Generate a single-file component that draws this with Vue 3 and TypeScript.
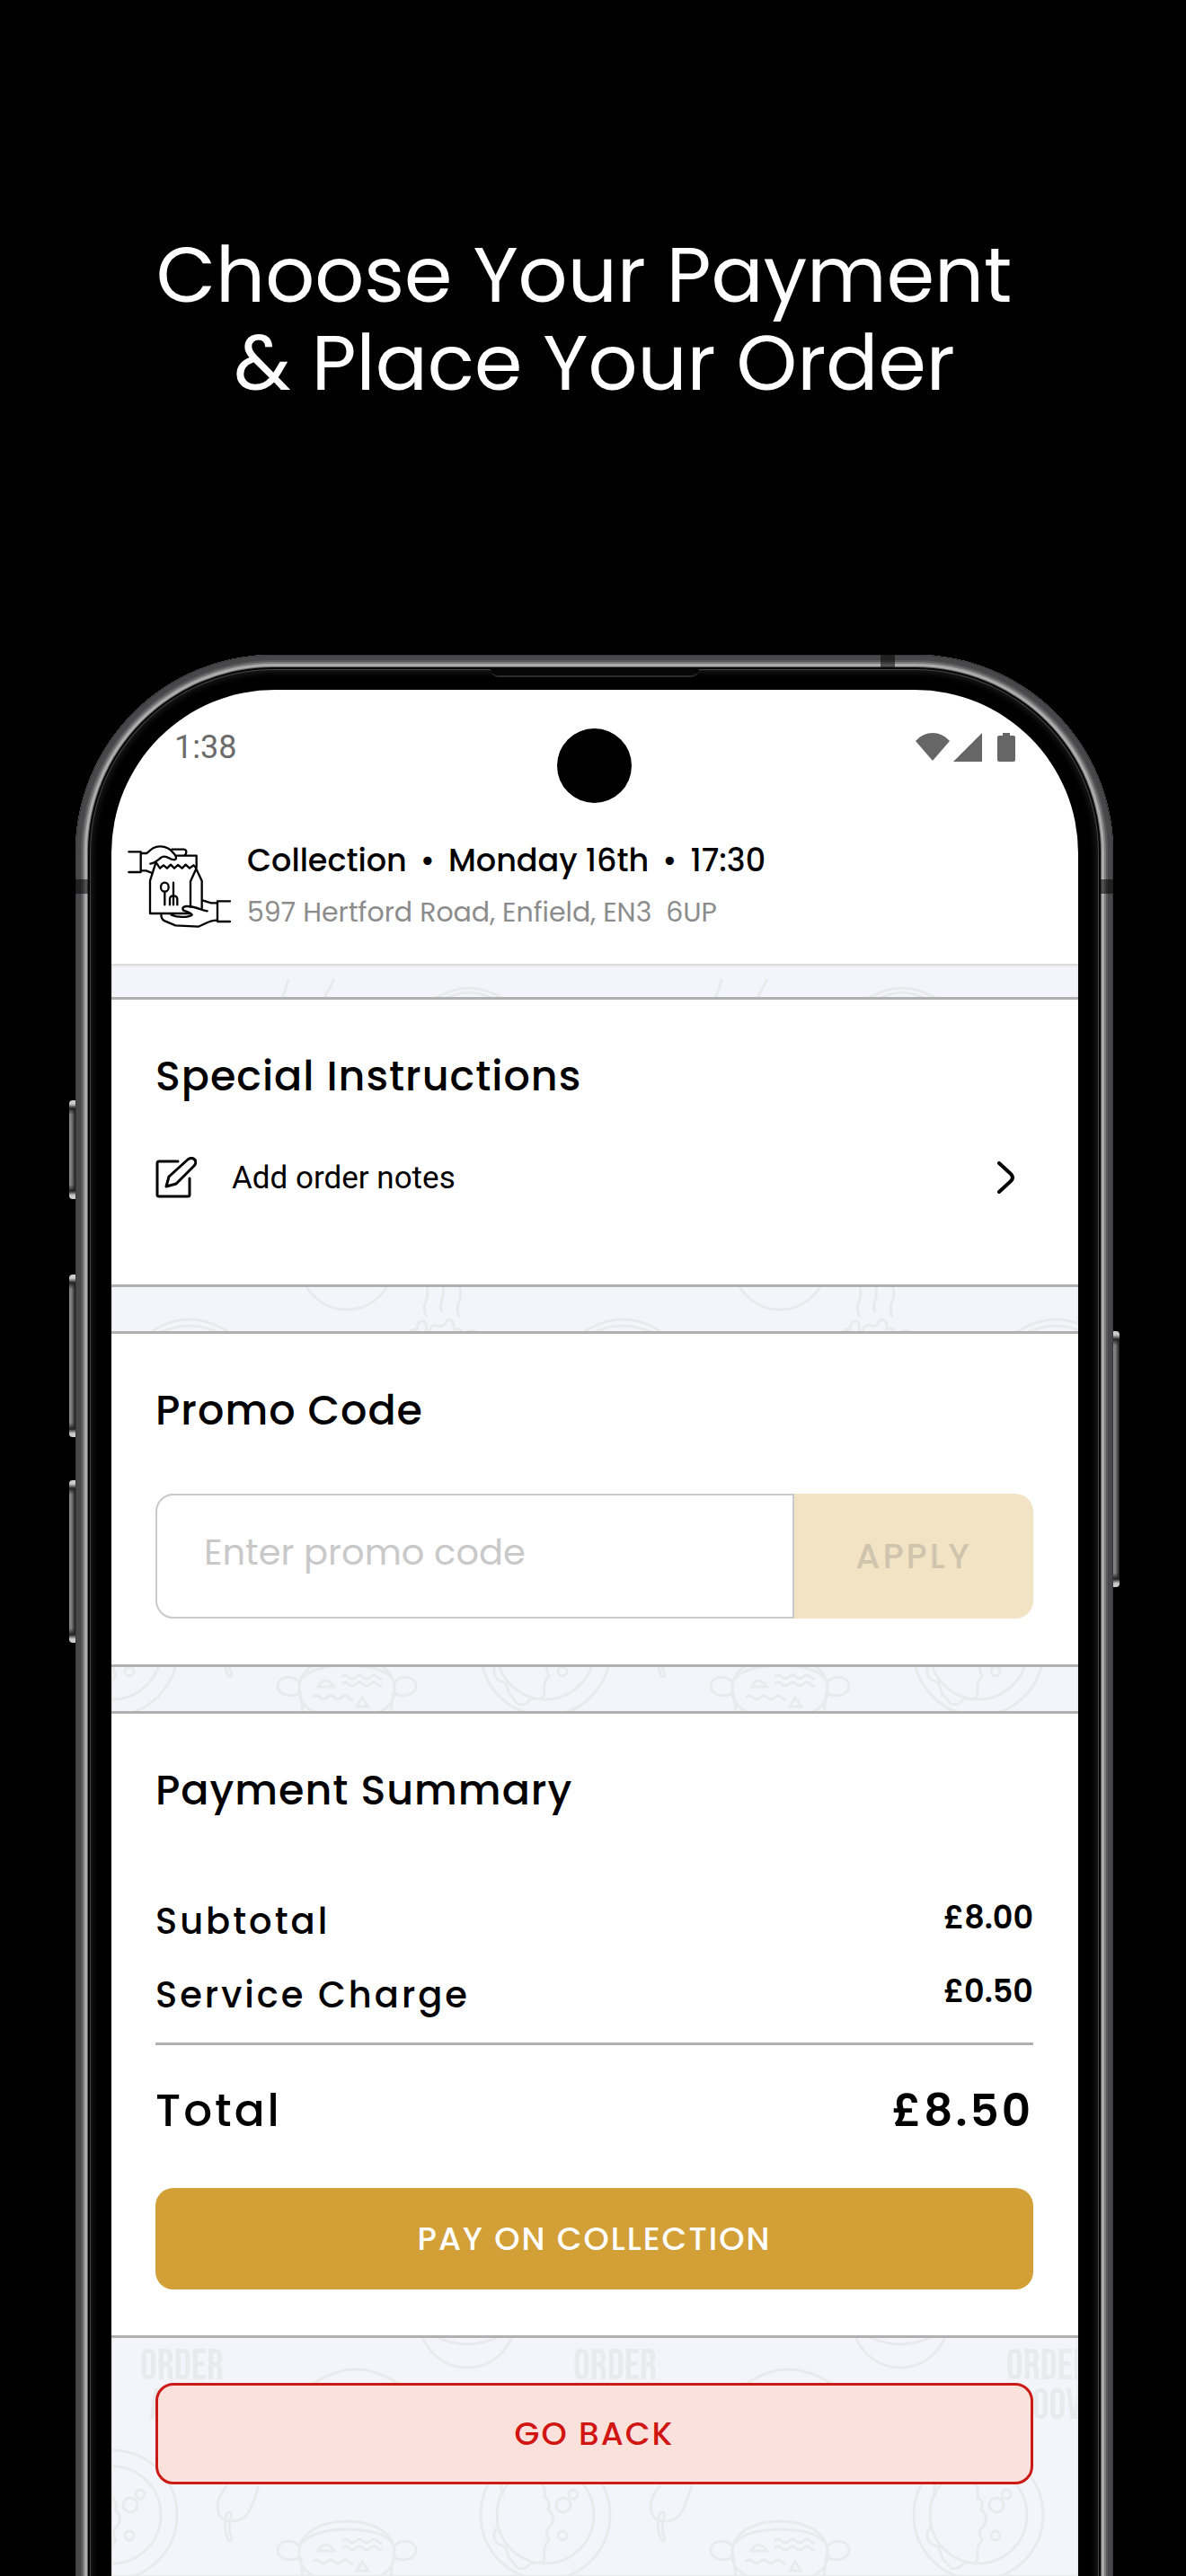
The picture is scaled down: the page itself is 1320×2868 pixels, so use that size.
<script setup lang="ts">
import { ref } from 'vue'

interface SummaryLine {
  label: string
  amount: string
}

const promo = ref('')

const lines: SummaryLine[] = [
  { label: 'Subtotal', amount: '£8.00' },
  { label: 'Service Charge', amount: '£0.50' },
]
</script>

<template>
  <main class="page">
    <h1 class="headline">Choose Your Payment&nbsp;<br />&amp; Place Your Order</h1>

    <div class="phone">
      <span class="key key-action"></span>
      <span class="key key-up"></span>
      <span class="key key-down"></span>
      <span class="key key-power"></span>
      <span class="band band-left"></span>
      <span class="band band-right"></span>
      <span class="band band-top"></span>
      <span class="speaker"></span>

      <div class="screen">
        <span class="camera"></span>
        <div class="status">
          <span>1:38</span>
          <svg class="status-icons" viewBox="0 0 112 34" aria-hidden="true">
            <path d="M0 10C11-2 27-2 38 10L19 32Z" />
            <path d="M74 1V33H42Z" />
            <path d="M97 1h8v3h4q2 0 2 2v25q0 2-2 2H93q-2 0-2-2V6q0-2 2-2h4Z" />
          </svg>
        </div>

        <header class="order">
          <svg class="bag" viewBox="66 116 345 282" aria-hidden="true">
            <path d="M70 141H110V209H70" />
            <path d="M112 146H130C146 131 156 122 176 123C198 124 207 130 216 142C226 152 232 160 226 166C218 171 209 165 200 160C190 156 182 156 177 161C166 170 156 180 142 181" />
            <path d="M214 133H254Q262 134 262 142Q262 149 256 153M230 154H296V192M113 204H128L148 212" />
            <path d="M162 178L174 196L186 186L198 196L210 184L222 196L234 185L248 196L260 184L273 196L286 186L295 195" />
            <path d="M160 178L141 238V347H274M295 198L276 240V325M295 198L314 238V330" />
            <ellipse cx="190" cy="259" rx="13" ry="15" />
            <path d="M190 275V318M219 244V318M207 318V300Q207 288 219 288Q232 288 232 300V318" />
            <path d="M408 306H366V374H408M364 312H345L316 303" />
            <path d="M332 339C310 335 290 322 262 323C246 325 246 338 262 340C270 343 280 346 281 352C268 360 236 362 212 352" />
            <path d="M178 350C178 362 180 368 190 372L226 387L302 391C322 385 335 370 364 370" />
          </svg>
          <div class="order-text">
            <p class="order-title">Collection<span class="dot">•</span>Monday 16th<span class="dot">•</span>17:30</p>
            <p class="order-address">597 Hertford Road, Enfield, EN3 &nbsp;6UP</p>
          </div>
        </header>

        <div class="content">
          <svg class="doodles" aria-hidden="true">
            <defs>
              <pattern id="food" width="482" height="962" patternUnits="userSpaceOnUse">
                <path d="M197 15Q195 26 189 38M248 15L236 38M355 40Q398 10 441 40M366 40Q398 20 430 40" />
                <circle cx="262" cy="331" r="52" />
                <path d="M350 352q4 14 0 22t1 17M368 352q3 12 0 20t0 14M386 352q5 14 1 22t0 17" />
                <path d="M330 410q4-6 10-4q0-10 6-10t4 12M354 410q0-12 10-9q5 2 8-4q4-6 8 0q2 6 0 8q10-3 10 6M396 408q6-4 14 2" />
                <path d="M38 412Q87 376 136 412M48 412Q87 390 126 412" />
                <text x="32" y="612">ORDER</text>
                <text x="42" y="656">AOOV</text>
                <circle cx="396" cy="546" r="53" />
                <path d="M360 564Q396 582 432 564M218 622Q272 580 326 622" />
                <g id="plate">
                  <circle cx="1" cy="763" r="72" />
                  <circle cx="1" cy="763" r="54" />
                  <ellipse cx="21" cy="752" rx="8" ry="8" />
                  <circle cx="32" cy="740" r="5" />
                  <circle cx="20" cy="786" r="5" />
                  <path class="cheese" d="M-52 758q-1 14 0 18c-8 10-4 20 8 22c4 6 2 14 10 18c2 8 12 10 19 0c6 2 14 0 15-3q-2-16 5-22q-4-10-2-12c9-8 8-16 1-22q4-8-4-14q2-8-3-16q4-6-3-16" />
                  <path d="M-46 742q-6-16 4-22" />
                </g>
                <use href="#plate" x="482" />
                <path d="M129 730c-16 18-14 38 3 40M164 730c-8 26-12 40-30 40M128 762q6-6 5 4q-4 16 1 22q0 6-4 3q-6-12-2-29Z" />
                <path d="M209 806C207 758 317 758 315 806C318 850 206 850 209 806ZM213 794C225 774 300 774 312 794M210 808l4 30M314 808l-4 30" />
                <path d="M209 798c-8-10-24-6-24 4c0 10 16 14 24 8M315 798c8-10 24-6 24 4c0 10-16 14-24 8" />
                <path d="M230 803q8-14 18 0ZM256 792q4-4 8 0t8 0t8 0t8 0t8 0t4 1M256 800q4-4 8 0t8 0t8 0t8 0t8 0t4 1M224 815q4-4 8 0t8 0t8 0t8 0t8 0t4 1M273 825l6-10l7 10Z" />
              </pattern>
            </defs>
            <rect width="100%" height="100%" fill="url(#food)" />
          </svg>

          <section class="card">
            <h2>Special Instructions</h2>
            <button class="notes" type="button">
              <svg class="edit" viewBox="0 0 46 46" aria-hidden="true">
                <path d="M25 5H4Q2 5 2 7V42Q2 44 4 44H36Q38 44 38 42V24" />
                <path d="M12 33L15 22L36 3C41-1 48 4 43 10L23 30Z" />
              </svg>
              <span>Add order notes</span>
              <svg class="chevron" viewBox="0 0 20 36" aria-hidden="true">
                <path d="M2 2L15 14Q19 18 15 22L2 34" />
              </svg>
            </button>
          </section>

          <section class="card">
            <h2><label for="promo">Promo Code</label></h2>
            <form class="promo" @submit.prevent>
              <input id="promo" v-model="promo" type="text" placeholder="Enter promo code" />
              <button type="submit" disabled>APPLY</button>
            </form>
          </section>

          <section class="card">
            <h2>Payment Summary</h2>
            <dl class="summary">
              <div v-for="line in lines" :key="line.label" class="line">
                <dt>{{ line.label }}</dt>
                <dd>{{ line.amount }}</dd>
              </div>
              <div class="line total">
                <dt>Total</dt>
                <dd>£8.50</dd>
              </div>
            </dl>
            <button class="action pay" type="button">PAY ON COLLECTION</button>
          </section>

          <div class="footer">
            <button class="action back" type="button">GO BACK</button>
          </div>
        </div>
      </div>
    </div>
  </main>
</template>

<style>
body {
  margin: 0;
  background: #000;
}
</style>

<style scoped>
.page {
  box-sizing: border-box;
  display: flex;
  flex-direction: column;
  min-height: 100vh;
  padding: 257px 81px 0 84px;
  overflow: hidden;
  background: #000;
  color: #000;
  font-family: Poppins, Inter, "Noto Sans", sans-serif;
}

h1, h2, p, dl, dd {
  margin: 0;
}

button, input {
  font-family: inherit;
}

.headline {
  margin-bottom: 276px;
  color: #fff;
  font-size: 86px;
  font-weight: 400;
  line-height: 98px;
  text-align: center;
}

.phone {
  position: relative;
  display: flex;
  flex: 1;
  padding: 39px 39px 0 40px;
  border-radius: 220px 220px 0 0;
  background: #000;
}

/* metal rim: rings from the outer edge inwards, running off the bottom */
.phone::before {
  content: "";
  position: absolute;
  inset: 0 0 -60px;
  border-radius: 220px 220px 0 0;
  box-shadow:
    inset 0 0 0 1px #38383a,
    inset 0 0 0 6px #48484a,
    inset 0 0 0 8px #5a5a5c,
    inset 0 0 0 10px #7c7c7c,
    inset 0 0 0 13px #ababab,
    inset 0 0 0 14px #606060,
    inset 0 0 0 16px #050505,
    inset 0 0 0 17px #444,
    inset 0 0 8px 18px #242424;
}

.screen {
  position: relative;
  display: flex;
  flex: 1;
  flex-direction: column;
  min-width: 0;
  overflow: hidden;
  border-radius: 182px 182px 0 0;
  background: #fff;
}

.camera {
  position: absolute;
  top: 43px;
  left: 50%;
  width: 83px;
  height: 83px;
  margin-left: -42px;
  border-radius: 50%;
  background: #000;
}

.speaker {
  position: absolute;
  top: 16px;
  left: 50%;
  width: 232px;
  height: 7px;
  margin-left: -116px;
  border-bottom: 2px solid #2c2c2c;
  border-radius: 0 0 10px 10px;
  background: #060606;
}

.band {
  position: absolute;
  background: #0008;
}

.band-left, .band-right {
  top: 250px;
  width: 14px;
  height: 16px;
}

.band-left { left: 0; }
.band-right { right: 0; }

.band-top {
  top: 0;
  right: 243px;
  width: 16px;
  height: 14px;
}

.key {
  position: absolute;
  left: -7px;
  width: 7px;
  border-radius: 4px 0 0 4px;
  background:
    linear-gradient(#ccc 4px, #222 9px, #0000 16px, #0000 calc(100% - 16px), #222 calc(100% - 9px), #ccc calc(100% - 4px)),
    linear-gradient(90deg, #8a8a8a, #777 40%, #1c1c1c);
}

.key-action { top: 496px; height: 110px; }
.key-up { top: 690px; height: 181px; }
.key-down { top: 919px; height: 181px; }

.key-power {
  top: 753px;
  right: -7px;
  left: auto;
  height: 285px;
  border-radius: 0 4px 4px 0;
}

.status {
  display: flex;
  align-items: center;
  justify-content: space-between;
  height: 128px;
  padding: 0 69px 0 70px;
  color: #6b6b6b;
  font: 36px Roboto, sans-serif;
}

.status-icons {
  width: 112px;
  height: 34px;
  fill: #666;
}

.order {
  display: flex;
  gap: 18px;
  align-items: center;
  padding: 33px 18px 28px;
  border-bottom: 2px solid #dcdcdc;
}

.bag {
  width: 115px;
  height: 94px;
  fill: none;
  stroke: #000;
  stroke-linecap: round;
  stroke-linejoin: round;
  stroke-width: 7;
}

.order-title {
  font-size: 35px;
  font-weight: 500;
  line-height: 58px;
}

.dot {
  margin: 0 15px;
}

.order-address {
  color: #8c8c8c;
  font-size: 30px;
  line-height: 58px;
}

.content {
  position: relative;
  display: flex;
  flex: 1;
  flex-direction: column;
  gap: 49px;
  padding-top: 35px;
  background: #f4f5fa;
}

.doodles {
  position: absolute;
  width: 100%;
  height: 100%;
  top: 0;
  fill: none;
  stroke: #e9eaec;
  stroke-width: 3;
}

.doodles text {
  fill: #e9eaec;
  stroke: none;
  font: 47px "Bebas Neue", "Roboto Condensed", "Liberation Sans Narrow", sans-serif;
}

.cheese {
  stroke-linejoin: round;
}

.card {
  position: relative;
  padding: 55px 50px 51px 49px;
  border: solid #b0b0b0;
  border-width: 3px 0;
  background: #fff;
}

.card h2 {
  font-size: 46px;
  font-weight: 500;
  letter-spacing: 1px;
  line-height: 60px;
}

.notes {
  display: flex;
  gap: 39px;
  align-items: center;
  width: 100%;
  height: 60px;
  margin: 53px 0 38px;
  padding: 0 20px 0 0;
  border: 0;
  background: none;
  color: #000;
  font: 35px Roboto, sans-serif;
}

.edit, .chevron {
  width: 46px;
  height: 46px;
  fill: none;
  stroke: #000;
  stroke-linecap: round;
  stroke-linejoin: round;
  stroke-width: 3;
}

.chevron {
  width: 20px;
  height: 36px;
  margin-left: auto;
  stroke-width: 4;
}

.promo {
  display: flex;
  height: 139px;
  margin-top: 63px;
}

.promo input {
  flex: 1;
  box-sizing: border-box;
  min-width: 0;
  padding: 0 52px 10px;
  border: 2px solid #c9c9c9;
  border-radius: 20px 0 0 20px;
  background: #fff;
  font-size: 40px;
}

.promo input::placeholder {
  color: #c9c9c9;
}

.promo button {
  width: 266px;
  padding: 0;
  border: 0;
  border-radius: 0 20px 20px 0;
  background: #f2e3c5;
  color: #d0c4ae;
  font-size: 39px;
  font-weight: 500;
  letter-spacing: 3px;
}

.summary {
  margin: 75px 0 13px;
}

.line {
  display: flex;
  justify-content: space-between;
  line-height: 82px;
}

.line dt {
  font-size: 40px;
  font-weight: 500;
  letter-spacing: 3px;
}

.line dd {
  font-size: 35px;
  font-weight: 600;
  line-height: 74px;
}

.total {
  margin-top: 12px;
  border-top: 3px solid #b0b0b0;
}

.total dt, .total dd {
  font-size: 50px;
  letter-spacing: 3px;
  line-height: 146px;
}

.action {
  width: 100%;
  height: 113px;
  padding: 0;
  border: 0;
  border-radius: 20px;
  font-size: 36px;
  font-weight: 500;
  letter-spacing: 2px;
}

.pay {
  display: block;
  background: #d3a038;
  color: #fff;
}

.back {
  border: 3px solid #cc1a17;
  background: #fbe1dc;
  color: #d01512;
}

.footer {
  position: relative;
  padding: 1px 50px 50px 49px;
}
</style>
